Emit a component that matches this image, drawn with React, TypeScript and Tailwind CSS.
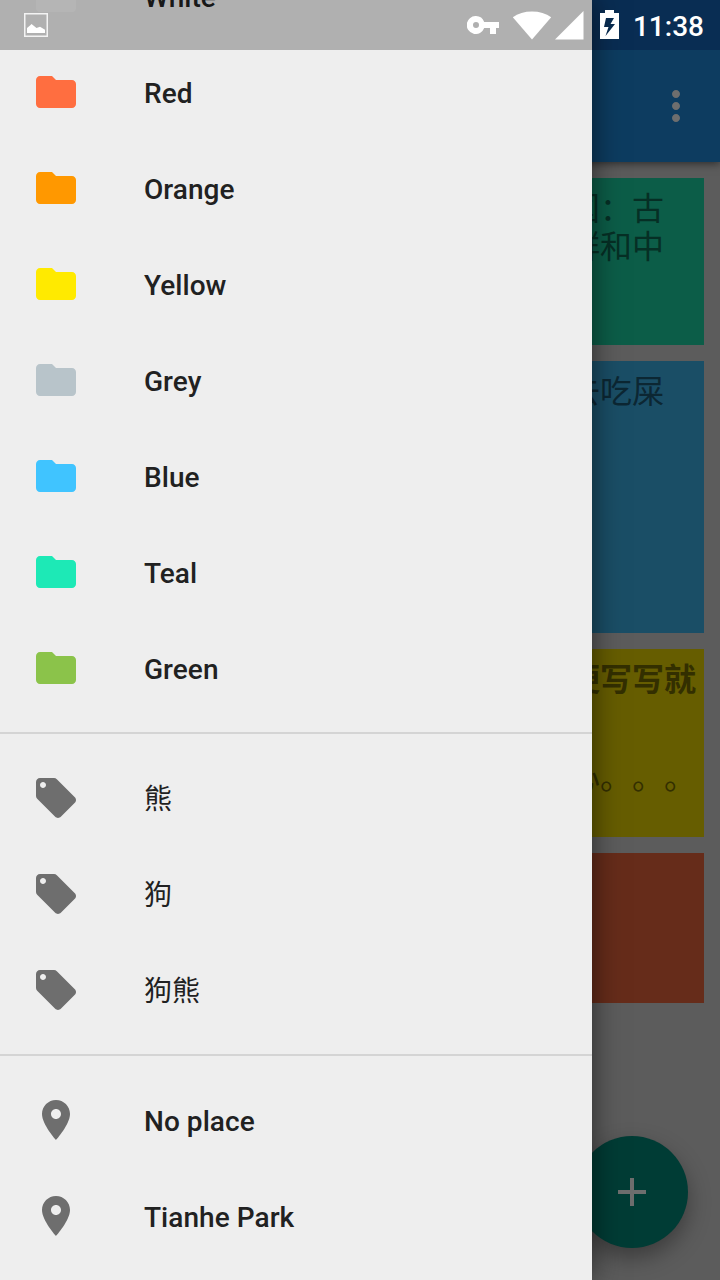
import type { ReactNode } from "react";

const folders = [
  { name: "White", color: "text-[#f5f5f5]" },
  { name: "Red", color: "text-[#ff6e40]" },
  { name: "Orange", color: "text-[#ff9800]" },
  { name: "Yellow", color: "text-[#ffea00]" },
  { name: "Grey", color: "text-[#b8c4ca]" },
  { name: "Blue", color: "text-[#40c4ff]" },
  { name: "Teal", color: "text-[#1de9b6]" },
  { name: "Green", color: "text-[#8bc34a]" },
];
const tags = ["熊", "狗", "狗熊"];
const places = ["No place", "Tianhe Park"];

const FOLDER = "M10 4H4c-1.1 0-1.99.9-1.99 2L2 18c0 1.1.9 2 2 2h16c1.1 0 2-.9 2-2V8c0-1.1-.9-2-2-2h-8l-2-2z";
const TAG = "M21.41 11.58l-9-9C12.05 2.22 11.55 2 11 2H4c-1.1 0-2 .9-2 2v7c0 .55.22 1.05.59 1.42l9 9c.36.36.86.58 1.41.58.55 0 1.05-.22 1.41-.59l7-7c.37-.36.59-.86.59-1.41 0-.55-.23-1.06-.59-1.42zM5.5 7C4.67 7 4 6.33 4 5.5S4.67 4 5.5 4 7 4.67 7 5.5 6.33 7 5.5 7z";
const PIN = "M12 2C8.13 2 5 5.13 5 9c0 5.25 7 13 7 13s7-7.75 7-13c0-3.87-3.13-7-7-7zm0 9.5c-1.38 0-2.5-1.12-2.5-2.5s1.12-2.5 2.5-2.5 2.5 1.12 2.5 2.5-1.12 2.5-2.5 2.5z";

function Row({ path, color, children }: { path: string; color: string; children: ReactNode }) {
  return (
    <li className="flex h-24 shrink-0 items-center gap-16 px-8">
      <svg viewBox="0 0 24 24" className={`size-12 shrink-0 ${color}`} fill="currentColor">
        <path d={path} />
      </svg>
      <span className="pt-1 text-[28px] leading-8 font-medium tracking-[0.05px]">{children}</span>
    </li>
  );
}

function Drawer() {
  return (
    <nav className="absolute inset-y-0 left-0 w-[592px] overflow-hidden bg-[#eeeeee] text-[#212121] shadow-[0_0_28px_rgba(0,0,0,0.55)]">
      <div className="-mt-[52px] flex flex-col">
        <ul className="border-b-2 border-[#d4d4d4] pb-4">
          {folders.map((f) => (
            <Row key={f.name} path={FOLDER} color={f.color}>{f.name}</Row>
          ))}
        </ul>
        <ul className="border-b-2 border-[#d4d4d4] py-4">
          {tags.map((t) => (
            <Row key={t} path={TAG} color="text-[#6e6e6e]">
              <span className="font-normal tracking-normal">{t}</span>
            </Row>
          ))}
        </ul>
        <ul className="pt-4">
          {places.map((p) => (
            <Row key={p} path={PIN} color="text-[#6e6e6e]">{p}</Row>
          ))}
        </ul>
      </div>
    </nav>
  );
}

function StatusBar() {
  return (
    <div className="absolute inset-x-0 top-0 flex h-[50px] items-center bg-black/26 pr-4 pl-6 text-white">
      <svg viewBox="0 0 24 24" className="size-6">
        <path d="M.75.75h22.500v22.500H.75z" fill="none" stroke="currentColor" strokeOpacity="0.85" strokeWidth="1.5" />
        <path d="M3 20v-5l3-2.500 1.500-1.500 5 4 3.500-1.200 5 3V20z" fill="currentColor" />
      </svg>
      <div className="ml-auto flex items-center">
        <svg viewBox="0 0 32 18" className="mr-[13px] h-[18px] w-8" fill="currentColor">
          <path fillRule="evenodd" d="M9 0a9 9 0 1 0 8.2 12H23v6h6v-6h3V6H17.200A9 9 0 0 0 9 0zm0 6a3 3 0 1 1 0 6 3 3 0 0 1 0-6z" />
        </svg>
        <svg viewBox="0 0 40 29" className="mr-[3px] h-[29px] w-10" fill="currentColor">
          <path d="M20 28.500.8 6.300C6 2.300 12.500.5 20 .5s14 1.800 19.200 5.800z" />
        </svg>
        <svg viewBox="0 0 29 29" className="mr-4 size-[29px]" fill="currentColor">
          <path d="M28.500 0v28.500H0z" />
        </svg>
        <svg viewBox="0 0 19 30" className="mr-3.5 h-[30px] w-[19px]" fill="currentColor">
          <path fillRule="evenodd" d="M5 0h9v3h5v26H0V3h5zM6 8 4 17h4.500L5.500 26 15 14h-4.500L14 8z" />
        </svg>
        <span className="pt-1 text-[28px] leading-8 font-medium">11:38</span>
      </div>
    </div>
  );
}

function Notes() {
  return (
    <main className="flex flex-1 flex-col items-end gap-4 px-4 pt-4 text-[32px] leading-[38px] [text-spacing-trim:space-all]">
      <article className="h-[167px] w-[336px] bg-[#0c5d48] px-2 pt-3 text-right text-[#062f25]">
        <p className="pr-8">国：古</p>
        <p className="pr-8">群和中</p>
      </article>
      <article className="h-[272px] w-[336px] bg-[#1a4e66] px-2 pt-3 text-right text-[#0c2733]">
        <p className="pr-8">去吃屎</p>
      </article>
      <article className="h-[188px] w-[336px] bg-[#665d00] px-2 pt-3 text-right text-[#332f00]">
        <p className="font-bold">便写写就</p>
        <p className="pt-[60px]">心。。。</p>
      </article>
      <article className="h-[150px] w-[336px] bg-[#662c1a]" />
    </main>
  );
}

export default function App() {
  return (
    <div className="relative flex h-[1280px] w-[720px] flex-col overflow-hidden bg-[#5c5c5c] font-['Roboto','Noto_Sans_CJK_SC',sans-serif]">
      <div className="h-[50px] shrink-0 bg-[#0d3d70]" />
      <header className="flex h-28 shrink-0 items-center justify-end bg-[#0d3c60] pr-5 text-[#6e6e6e] shadow-[0_2px_8px_rgba(0,0,0,0.5)] [clip-path:inset(0_0_-16px_0)]">
        <svg viewBox="0 0 24 24" className="size-12" fill="currentColor">
          <path d="M12 8c1.100 0 2-.9 2-2s-.9-2-2-2-2 .9-2 2 .9 2 2 2zm0 2c-1.100 0-2 .9-2 2s.9 2 2 2 2-.9 2-2-.9-2-2-2zm0 6c-1.100 0-2 .9-2 2s.9 2 2 2 2-.9 2-2-.9-2-2-2z" />
        </svg>
      </header>
      <Notes />
      <button className="absolute right-8 bottom-8 flex size-28 items-center justify-center rounded-full bg-[#003c35] text-[#6e6e6e] shadow-[0_10px_22px_rgba(0,0,0,0.35)]">
        <svg viewBox="0 0 24 24" className="size-12" fill="currentColor">
          <path d="M19 13h-6v6h-2v-6H5v-2h6V5h2v6h6v2z" />
        </svg>
      </button>
      <Drawer />
      <StatusBar />
    </div>
  );
}
